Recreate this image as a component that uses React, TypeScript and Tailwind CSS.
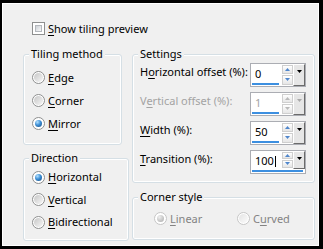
import React from 'react';
import clsx from 'clsx';

function Mn({ text, at }: { text: string; at: number }) {
  return (
    <span>
      {text.slice(0, at)}
      <span className="underline underline-offset-[2px]">{text[at]}</span>
      {text.slice(at + 1)}
    </span>
  );
}

function Radio({ checked = false, disabled = false }: { checked?: boolean; disabled?: boolean }) {
  return (
    <span
      className={clsx(
        'flex h-[13px] w-[13px] shrink-0 items-center justify-center rounded-full border bg-white',
        disabled ? 'border-[#c6c6c6]' : 'border-[#8e8f8f]'
      )}
    >
      {checked ? (
        <span
          className={clsx(
            'h-[7px] w-[7px] rounded-full',
            disabled
              ? 'bg-[radial-gradient(circle_at_35%_30%,#efefef,#a9a9a9)]'
              : 'bg-[radial-gradient(circle_at_35%_30%,#b4e2ff_0%,#3d8fd6_45%,#174a7c_100%)]'
          )}
        />
      ) : (
        <span
          className={clsx(
            'h-[9px] w-[9px] rounded-full',
            disabled
              ? 'bg-[linear-gradient(135deg,#e4e4e4,#fbfbfb)]'
              : 'bg-[linear-gradient(135deg,#c6c6c6,#f7f7f7)]'
          )}
        />
      )}
    </span>
  );
}

function RadioRow({
  label,
  at,
  checked,
  disabled,
  h = 'h-[23px]',
}: {
  label: string;
  at: number;
  checked?: boolean;
  disabled?: boolean;
  h?: string;
}) {
  return (
    <div className={clsx('flex items-center gap-[3px]', h, disabled && 'text-[#838383]')}>
      <Radio checked={checked} disabled={disabled} />
      <Mn text={label} at={at} />
    </div>
  );
}

function Group({
  title,
  className,
  children,
}: {
  title: string;
  className?: string;
  children: React.ReactNode;
}) {
  return (
    <div
      className={clsx(
        'relative rounded-[3px] border border-[#d5dfe5] shadow-[inset_0_0_0_1px_#ffffff]',
        className
      )}
    >
      <span className="absolute -top-[8px] left-[5px] bg-[#f0f0f0] px-[2px] leading-[14px]">
        {title}
      </span>
      {children}
    </div>
  );
}

function Tri({ dir, color }: { dir: 'up' | 'down'; color: string }) {
  return (
    <svg width="5" height="3" viewBox="0 0 5 3" className="block">
      <path d={dir === 'up' ? 'M2.5 0L5 3H0Z' : 'M0 0H5L2.5 3Z'} fill={color} />
    </svg>
  );
}

function Spinner({ disabled }: { disabled?: boolean }) {
  const c = disabled ? '#b9b9b9' : '#4f86cc';
  return (
    <div className="ml-[1px] flex w-[11px] flex-col gap-[1px] py-[1px]">
      <div className="flex flex-1 items-center justify-center border border-[#cfcfcf] bg-[linear-gradient(#ffffff,#e6e6e6)]">
        <Tri dir="up" color={c} />
      </div>
      <div className="flex flex-1 items-center justify-center border border-[#cfcfcf] bg-[linear-gradient(#ffffff,#e6e6e6)]">
        <Tri dir="down" color={c} />
      </div>
    </div>
  );
}

function DropBtn({ disabled }: { disabled?: boolean }) {
  return (
    <div className="flex w-[12px] justify-center border-t border-l border-r border-b border-t-white border-l-white border-r-[#6b6b6b] border-b-[#6b6b6b] bg-[#e6e6e6] pt-[5px]">
      <Tri dir="down" color={disabled ? '#a9a9a9' : '#000000'} />
    </div>
  );
}

function NumField({
  value,
  disabled,
  full,
  caret,
}: {
  value: string;
  disabled?: boolean;
  full?: boolean;
  caret?: boolean;
}) {
  const text = (
    <span className={clsx('pl-[4px] pt-[3px] leading-[14px]', disabled && 'text-[#a3a3a3]')}>
      {value}
      {caret && <span className="ml-[1px] inline-block h-[11px] w-[1px] bg-black align-[-2px]" />}
    </span>
  );

  if (full) {
    return (
      <div className="flex h-[24px] w-[56px] flex-col border border-[#abadb3] bg-white">
        <div className="flex h-[18px]">
          <div className="flex w-[30px]">{text}</div>
          <Spinner disabled={disabled} />
          <DropBtn disabled={disabled} />
        </div>
        <div className="mt-[1px] ml-[1px] h-[2px] w-[51px] bg-[#3c8fe0]" />
      </div>
    );
  }

  return (
    <div className="flex h-[24px] w-[56px] border border-[#abadb3] bg-white">
      <div className="flex w-[30px] flex-col">
        {text}
        <div className="mt-[2px] ml-[1px] h-[2px] w-[27px] bg-[#3c8fe0]" />
      </div>
      <Spinner disabled={disabled} />
      <DropBtn disabled={disabled} />
    </div>
  );
}

function SettingRow({
  label,
  at,
  disabled,
  children,
}: {
  label: string;
  at: number;
  disabled?: boolean;
  children: React.ReactNode;
}) {
  return (
    <div className="flex h-[29px] items-center justify-between">
      <span className={clsx('mb-[6px]', disabled && 'text-[#a3a3a3]')}>
        <Mn text={label} at={at} />
      </span>
      {children}
    </div>
  );
}

export default function App() {
  return (
    <div className="h-[249px] w-[323px] border-t-[3px] border-r-[4px] border-b-[3px] border-l-[2px] border-black font-['Noto_Sans',sans-serif] text-[11px] leading-[14px] text-black">
      <div className="h-full border border-white bg-[#f0f0f0]">
        {/* Preview toggle */}
        <div className="mt-[18px] ml-[29px] flex h-[13px] items-center gap-[3px]">
          <span className="h-[13px] w-[13px] border border-[#8e8f8f] bg-white p-[2px]">
            <span className="block h-full w-full border border-[#b4b8bd] bg-[linear-gradient(135deg,#cdd1d6,#f8f8f8)]" />
          </span>
          <Mn text="Show tiling preview" at={0} />
        </div>

        <div className="mt-[19px] ml-[20px] flex gap-[3px]">
          {/* Left column */}
          <div className="flex w-[106px] flex-col">
            <Group title="Tiling method" className="h-[91px] w-[99px] pt-[11px] pl-[8px]">
              <RadioRow label="Edge" at={0} />
              <RadioRow label="Corner" at={0} />
              <RadioRow label="Mirror" at={0} checked />
            </Group>
            <Group title="Direction" className="mt-[13px] h-[83px] pt-[7px] pl-[8px]">
              <RadioRow label="Horizontal" at={0} checked h="h-[22px]" />
              <RadioRow label="Vertical" at={0} />
              <RadioRow label="Bidirectional" at={0} h="h-[22px]" />
            </Group>
          </div>

          {/* Right column */}
          <div className="flex w-[183px] flex-col">
            <Group title="Settings" className="h-[129px] pt-[5px] pr-[8px] pl-[7px]">
              <SettingRow label="Horizontal offset (%):" at={1}>
                <NumField value="0" />
              </SettingRow>
              <SettingRow label="Vertical offset (%):" at={1} disabled>
                <NumField value="1" disabled />
              </SettingRow>
              <SettingRow label="Width (%):" at={0}>
                <NumField value="50" />
              </SettingRow>
              <SettingRow label="Transition (%):" at={0}>
                <NumField value="100" full caret />
              </SettingRow>
            </Group>
            <Group title="Corner style" className="mt-[14px] h-[43px] pt-[9px] pl-[21px]">
              <div className="flex">
                <div className="w-[83px]">
                  <RadioRow label="Linear" at={0} checked disabled />
                </div>
                <RadioRow label="Curved" at={1} disabled />
              </div>
            </Group>
          </div>
        </div>
      </div>
    </div>
  );
}
